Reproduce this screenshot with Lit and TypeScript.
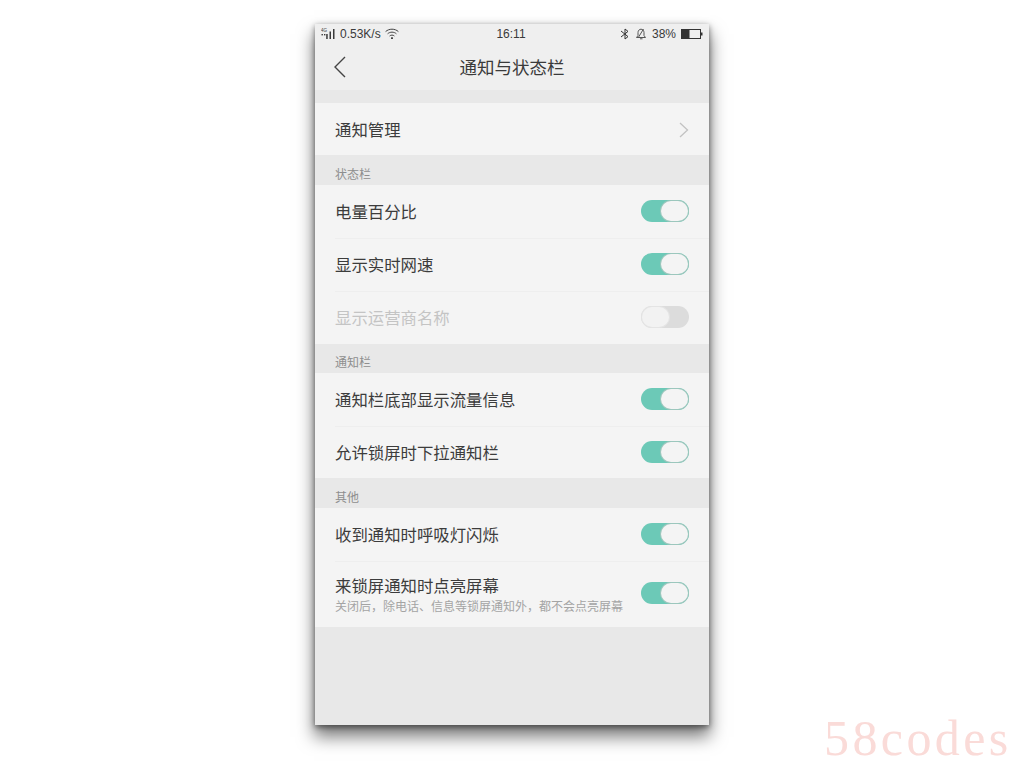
import { LitElement, html, css } from "lit";
import { customElement } from "lit/decorators.js";

type Row = { label: string; on: boolean; disabled?: boolean; sub?: string; h: number };
type Section = { title: string; h: number; rows: Row[] };

const sections: Section[] = [
  {
    title: "状态栏",
    h: 30,
    rows: [
      { label: "电量百分比", on: true, h: 53 },
      { label: "显示实时网速", on: true, h: 53 },
      { label: "显示运营商名称", on: false, disabled: true, h: 53 },
    ],
  },
  {
    title: "通知栏",
    h: 29,
    rows: [
      { label: "通知栏底部显示流量信息", on: true, h: 53 },
      { label: "允许锁屏时下拉通知栏", on: true, h: 52 },
    ],
  },
  {
    title: "其他",
    h: 30,
    rows: [
      { label: "收到通知时呼吸灯闪烁", on: true, h: 53 },
      {
        label: "来锁屏通知时点亮屏幕",
        sub: "关闭后，除电话、信息等锁屏通知外，都不会点亮屏幕",
        on: true,
        h: 66,
      },
    ],
  },
];

@customElement("app-root")
export class AppRoot extends LitElement {
  static styles = css`
    :host {
      display: flex;
      justify-content: center;
      box-sizing: border-box;
      width: 1024px;
      height: 768px;
      padding-top: 24px;
      background: #fff;
      position: relative;
      overflow: hidden;
      font-family: "Liberation Sans", "Noto Sans CJK SC", sans-serif;
      color: #3c3c3c;
    }
    .phone {
      width: 394px;
      height: 701px;
      background: #e8e8e8;
      display: flex;
      flex-direction: column;
      box-shadow: 0 2px 6px rgba(0, 0, 0, 0.5), 0 11px 16px 1px rgba(0, 0, 0, 0.5);
    }
    .top {
      background: #efefef;
      height: 66px;
      display: flex;
      flex-direction: column;
    }
    .status {
      height: 20px;
      padding: 0 6px;
      display: grid;
      grid-template-columns: 1fr auto 1fr;
      align-items: center;
      font-size: 12px;
      color: #3a3a3a;
    }
    .status-l,
    .status-r {
      display: flex;
      align-items: center;
    }
    .status-l {
      gap: 3px;
    }
    .status-l .wifi {
      margin-left: 1px;
    }
    .status-r {
      justify-content: flex-end;
      gap: 5px;
    }
    .clock {
      padding-right: 2px;
    }
    .nav {
      flex: 1;
      display: flex;
      align-items: center;
      justify-content: center;
      position: relative;
      font-size: 17.5px;
      padding-bottom: 1px;
      color: #3a3a3a;
    }
    .back {
      position: absolute;
      left: 19px;
      top: 12px;
    }
    .band {
      height: 13px;
      background: #e8e8e8;
    }
    .row {
      background: #f4f4f4;
      display: flex;
      align-items: center;
      justify-content: space-between;
      padding: 0 20px;
      box-sizing: border-box;
      position: relative;
      font-size: 16.4px;
    }
    .row.low {
      padding-top: 2px;
    }
    .row + .row::before {
      content: "";
      position: absolute;
      left: 20px;
      right: 0;
      top: 0;
      height: 1px;
      background: #eeeeee;
    }
    .row.off .label {
      color: #c4c4c4;
    }
    .texts {
      display: flex;
      flex-direction: column;
    }
    .texts.two {
      padding-top: 3px;
    }
    .label {
      line-height: 20px;
    }
    .sub {
      font-size: 12px;
      line-height: 16px;
      margin-top: 3px;
      color: #a4a4a4;
    }
    .head {
      font-size: 12px;
      color: #8e8e8e;
      padding: 0 20px;
      box-sizing: border-box;
      display: flex;
      align-items: center;
      background: #e8e8e8;
    }
    .sw {
      width: 48px;
      height: 22px;
      border-radius: 11px;
      background: #6cc9b7;
      box-sizing: border-box;
      position: relative;
      flex: none;
      margin-bottom: 2px;
    }
    .sw::after {
      content: "";
      position: absolute;
      top: 1px;
      right: 1px;
      width: 27px;
      height: 20px;
      border-radius: 10px;
      background: #f4f4f4;
      box-shadow: 0 0 0 1px #9cc7bd;
    }
    .sw.dis {
      background: #dcdcdc;
    }
    .sw.dis::after {
      right: auto;
      left: 1px;
      background: #f2f2f2;
      box-shadow: 0 0 0 1px #e4e4e4;
    }
    .mark {
      position: absolute;
      left: 824px;
      top: 708px;
      font-family: "Liberation Serif", serif;
      font-size: 50px;
      line-height: 60px;
      letter-spacing: 3.4px;
      color: #fadbd8;
      white-space: nowrap;
    }
  `;

  private signal() {
    return html`<svg width="16" height="12" viewBox="0 0 16 12">
      <text x="0" y="4" font-size="4.5" fill="#3a3a3a" font-family="Liberation Sans, sans-serif">4G</text>
      <g fill="#3a3a3a">
        <rect x="0.5" y="6" width="1.4" height="1.4"></rect>
        <rect x="3" y="6" width="1.4" height="1.4"></rect>
        <rect x="5.2" y="6" width="1.5" height="5"></rect>
        <rect x="8.5" y="3.5" width="1.5" height="7.5"></rect>
        <rect x="12" y="1" width="1.5" height="10"></rect>
      </g>
    </svg>`;
  }

  private wifi() {
    return html`<svg class="wifi" width="14" height="12" viewBox="0 0 14 12" fill="none" stroke="#444" stroke-width="1">
      <path d="M0.6 3.6C4 0.4 10 0.4 13.4 3.6"></path>
      <path d="M2.6 5.8C5 3.6 9 3.6 11.4 5.8"></path>
      <path d="M4.6 8C6 6.8 8 6.8 9.4 8"></path>
      <path d="M6 10L7 11L8 10C7.4 9.5 6.6 9.5 6 10Z" fill="#444"></path>
    </svg>`;
  }

  private bt() {
    return html`<svg width="10" height="12" viewBox="0 0 10 12" fill="none" stroke="#333" stroke-width="1">
      <path d="M1 3L8 8.6L5 11V1L8 3.4L1 9"></path>
    </svg>`;
  }

  private bell() {
    return html`<svg width="12" height="12" viewBox="0 0 12 12" fill="none" stroke="#555" stroke-width="1">
      <path d="M1.5 9.5H10.5L9 7.5V4.5C9 2.6 7.6 1.2 6 1.2C4.4 1.2 3 2.6 3 4.5V7.5Z"></path>
      <path d="M5 10.8H7.5"></path>
      <path d="M3 10L8.5 1"></path>
    </svg>`;
  }

  private battery() {
    return html`<svg width="22" height="10" viewBox="0 0 22 10">
      <rect x="0.5" y="0.5" width="19" height="9" fill="none" stroke="#333"></rect>
      <rect x="1" y="1" width="7.5" height="8" fill="#333"></rect>
      <rect x="20" y="3.5" width="1.5" height="3" fill="#333"></rect>
    </svg>`;
  }

  private row(r: Row) {
    return html`<div class="row ${r.disabled ? "off" : ""} ${r.h === 52 ? "low" : ""}" style="height:${r.h}px">
      <div class="texts ${r.sub ? "two" : ""}">
        <div class="label">${r.label}</div>
        ${r.sub ? html`<div class="sub">${r.sub}</div>` : ""}
      </div>
      <div class="sw ${r.disabled ? "dis" : ""}"></div>
    </div>`;
  }

  render() {
    return html`
      <div class="phone">
        <div class="top">
          <div class="status">
            <div class="status-l">${this.signal()}<span>0.53K/s</span>${this.wifi()}</div>
            <div class="clock">16:11</div>
            <div class="status-r">${this.bt()}${this.bell()}<span>38%</span>${this.battery()}</div>
          </div>
          <div class="nav">
            <svg class="back" width="12" height="22" viewBox="0 0 12 22" fill="none" stroke="#444" stroke-width="1.4">
              <path d="M11 1L1 11L11 21"></path>
            </svg>
            通知与状态栏
          </div>
        </div>
        <div class="band"></div>
        <div class="row low" style="height:52px">
          <div class="label">通知管理</div>
          <svg width="10" height="16" viewBox="0 0 10 16" fill="none" stroke="#c2c2c2" stroke-width="1.3">
            <path d="M1 1L8.5 8L1 15"></path>
          </svg>
        </div>
        ${sections.map(
          (s) => html`
            <div class="head" style="height:${s.h}px;padding-top:${s.h - 23}px">${s.title}</div>
            ${s.rows.map((r) => this.row(r))}
          `
        )}
      </div>
      <div class="mark">58codes</div>
    `;
  }
}
